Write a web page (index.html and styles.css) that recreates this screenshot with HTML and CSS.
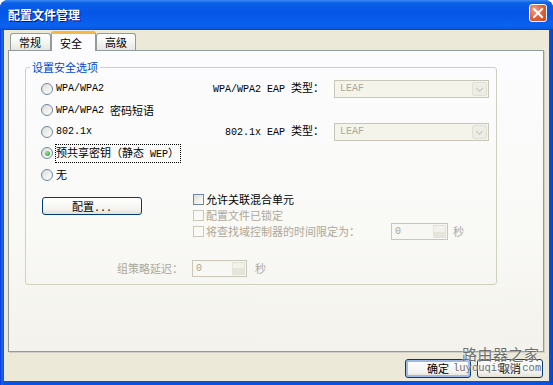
FILE: index.html
```html
<!DOCTYPE html>
<html lang="zh-CN">
<head>
<meta charset="UTF-8">
<title>配置文件管理</title>
<link rel="stylesheet" href="styles.css">
</head>
<body>
<div class="window">
  <div class="titlebar">
    <span class="title">配置文件管理</span>
    <span class="close">
      <svg width="16" height="16" viewBox="0 0 16 16"><path d="M4 4 L12 12 M12 4 L4 12" stroke="#fff" stroke-width="2" stroke-linecap="square"/></svg>
    </span>
  </div>
  <div class="client">
    <div class="tabs">
      <div class="tab tab-general">常规</div>
      <div class="tab tab-security active">安全</div>
      <div class="tab tab-advanced">高级</div>
    </div>
    <div class="panel">
      <fieldset class="group">
        <legend>设置安全选项</legend>
        <div class="options">
          <div class="opt"><span class="radio"></span><span class="en">WPA/WPA2</span></div>
          <div class="eap-label"><span class="en">WPA/WPA2 EAP </span>类型：</div>
          <div class="select"><span class="en">LEAF</span><span class="drop"></span></div>
          <div class="opt"><span class="radio"></span><span class="en">WPA/WPA2 </span>密码短语</div>
          <div class="opt"><span class="radio"></span><span class="en">802.1x</span></div>
          <div class="eap-label"><span class="en">802.1x EAP </span>类型：</div>
          <div class="select"><span class="en">LEAF</span><span class="drop"></span></div>
          <div class="opt"><span class="radio checked"></span><span class="focus">预共享密钥（静态<span class="en"> WEP</span>）</span></div>
          <div class="opt"><span class="radio"></span>无</div>
        </div>
        <div class="extra">
          <div class="btn config">配置<span class="en">...</span></div>
          <div class="check"><span class="box"></span>允许关联混合单元</div>
          <div class="check disabled"><span class="box"></span>配置文件已锁定</div>
          <div class="check disabled">
            <span class="box"></span>将查找域控制器的时间限定为：
            <span class="spin spin-domain"><span class="en">0</span><span class="arrows"></span></span>
            <span class="unit unit-domain">秒</span>
          </div>
        </div>
        <div class="delay">
          <div class="delay-label">组策略延迟：</div>
          <div class="delay-value">
            <span class="spin spin-delay"><span class="en">0</span><span class="arrows"></span></span>
            <span class="unit">秒</span>
          </div>
        </div>
      </fieldset>
    </div>
    <div class="buttons">
      <div class="btn default">确定</div>
      <div class="btn">取消</div>
    </div>
  </div>
  <div class="watermark">
    <div class="wm-name">路由器之家</div>
    <div class="wm-url">luyouqi520.com</div>
  </div>
</div>
</body>
</html>
```

FILE: styles.css
```css
* {
    box-sizing: border-box;
}

body {
    margin: 0;
    background: #fff;
    font: 11px/13px "Noto Sans CJK SC", sans-serif;
    color: #000;
}

.en {
    font: 10px/13px "Liberation Mono", monospace;
    white-space: pre;
}

.window {
    position: relative;
    width: 553px;
    height: 385px;
    display: flex;
    flex-direction: column;
    background: linear-gradient(to right, #0831d9, #166aee 2px, #0a52df 4px, #0a52df 549px, #0840c8);
    border-radius: 8px 8px 0 0;
    overflow: hidden;
}

.titlebar {
    height: 30px;
    display: flex;
    justify-content: space-between;
    align-items: center;
    padding: 0 6px 0 8px;
    background: linear-gradient(#3c8bf5, #0a5fe8 10%, #0555e6 45%, #0a62f0 85%, #0a58e4 95%, #0340d2);
}

.title {
    font: bold 12px/14px "Noto Sans CJK SC", sans-serif;
    color: #fff;
    text-shadow: 1px 1px #0f1089;
}

.close {
    align-self: flex-start;
    margin-top: 4px;
    width: 18px;
    height: 18px;
    display: flex;
    align-items: center;
    justify-content: center;
    border: 1px solid #fff;
    border-radius: 3px;
    background: radial-gradient(circle at 30% 30%, #f0a080, #e0623c 50%, #c84716);
}

.client {
    flex: 1;
    margin: 0 4px 4px;
    display: flex;
    flex-direction: column;
    padding: 1px 5px 3px 4px;
    background: #ece9d8;
}

.tabs {
    display: flex;
    height: 19px;
    padding-left: 2px;
    position: relative;
    z-index: 1;
}

.tab {
    height: 17px;
    margin-top: 2px;
    border: 1px solid #919b9c;
    border-bottom: none;
    border-radius: 3px 3px 0 0;
    background: linear-gradient(#fff, #f3f3ef 60%, #e6e5df);
    padding: 2px 0 0 8px;
}

.tab-general {
    width: 41px;
}

.tab-security {
    width: 45px;
}

.tab-advanced {
    width: 40px;
}

.tab.active {
    height: 20px;
    margin-top: 0;
    margin-bottom: -1px;
    padding-top: 3px;
    border-top: 3px solid #f7b64a;
    background: #fcfcfe;
}

.panel {
    flex: 1;
    margin-bottom: 7px;
    border: 1px solid #919b9c;
    background: linear-gradient(#fcfcfe, #f9f9f6 60%, #f3f2ec);
    box-shadow: 1px 1px 0 #d2d0c4;
}

.group {
    width: 472px;
    margin: 10px 0 0 16px;
    padding: 0 0 7px;
    border: 1px solid #d0d0bf;
    border-radius: 3px;
}

.group legend {
    margin-left: 4px;
    padding: 0 2px;
    color: #0046d5;
}

.options {
    display: grid;
    grid-template-columns: 150px 1fr 155px;
    grid-auto-rows: 21.5px;
    column-gap: 10px;
    align-items: center;
    margin: 4px 7px 0 15px;
}

.opt {
    grid-column: 1;
    display: flex;
    align-items: center;
    white-space: nowrap;
}

.radio {
    width: 12px;
    height: 12px;
    flex: none;
    margin-right: 3px;
    border: 1px solid #6d86a3;
    border-radius: 50%;
    background: linear-gradient(135deg, #dcdcd7, #fff);
    display: flex;
    align-items: center;
    justify-content: center;
}

.radio.checked::after {
    content: "";
    width: 5px;
    height: 5px;
    border-radius: 50%;
    background: radial-gradient(circle at 35% 35%, #8ee28e, #21a121);
}

.focus {
    outline: 1px dotted #000;
    padding: 1px 1px 1px 0;
}

.eap-label {
    text-align: right;
    white-space: nowrap;
}

.select {
    height: 18px;
    display: flex;
    justify-content: space-between;
    align-items: center;
    padding: 0 1px 0 5px;
    border: 1px solid #c9c7ba;
    background: #f5f4ea;
    color: #aca899;
}

.drop {
    width: 15px;
    height: 14px;
    border: 1px solid #e2e1d8;
    border-radius: 2px;
    background: #eeede5;
    position: relative;
}

.drop::after {
    content: "";
    position: absolute;
    left: 4px;
    top: 3px;
    width: 4px;
    height: 4px;
    border-right: 1px solid #c9c7ba;
    border-bottom: 1px solid #c9c7ba;
    transform: rotate(45deg);
}

.extra {
    display: grid;
    grid-template-columns: 152px 1fr;
    grid-auto-rows: 16px;
    margin: 6px 7px 0 15px;
}

.btn {
    height: 19px;
    border: 1px solid #003c74;
    border-radius: 3px;
    background: linear-gradient(#fff, #f4f3ee 70%, #e2dfd6);
    text-align: center;
    line-height: 17px;
}

.config {
    grid-column: 1;
    grid-row: 1 / span 2;
    width: 100px;
    height: 18px;
    margin: 5px 0 0 1px;
    line-height: 16px;
}

.check {
    grid-column: 2;
    display: flex;
    align-items: center;
    gap: 2px;
    white-space: nowrap;
}

.box {
    width: 11px;
    height: 11px;
    flex: none;
    border: 1px solid #6d86a3;
    background: linear-gradient(135deg, #dcdcd7, #fff);
}

.check.disabled {
    color: #aca899;
}

.check.disabled .box {
    border-color: #cac8bb;
    background: #fafaf7;
}

.spin {
    height: 17px;
    display: flex;
    justify-content: space-between;
    align-items: center;
    padding: 0 1px 0 3px;
    border: 1px solid #c9c7ba;
    background: #f7f7f3;
    color: #aca899;
}

.spin-domain {
    width: 57px;
    margin-left: auto;
}

.spin-delay {
    width: 55px;
}

.arrows {
    width: 13px;
    height: 13px;
    border: 1px solid #e4e3da;
    background: linear-gradient(#f2f1ea 50%, #e6e5dc 50%);
}

.unit {
    margin-left: 8px;
    color: #aca899;
}

.unit-domain {
    margin: 0 25px 0 3px;
}

.delay {
    display: grid;
    grid-template-columns: 151px 1fr;
    align-items: center;
    margin: 20px 7px 0 15px;
    color: #aca899;
}

.delay-label {
    text-align: right;
    padding-right: 9px;
}

.delay-value {
    display: flex;
    align-items: center;
}

.buttons {
    display: flex;
    justify-content: flex-end;
    gap: 6px;
    margin-right: 1px;
}

.buttons .btn {
    width: 66px;
}

.btn.default {
    box-shadow: inset 0 0 0 2px #9cb9ea;
}

.watermark {
    position: absolute;
    left: 453px;
    top: 345px;
    color: #6e6e6e;
    text-shadow: 0 0 2px #fff;
}

.wm-name {
    margin-left: 9px;
    font: 15px/17px "Noto Sans CJK SC", sans-serif;
    letter-spacing: 0.5px;
}

.wm-url {
    font: 10.5px/13px "Liberation Mono", monospace;
}
```
